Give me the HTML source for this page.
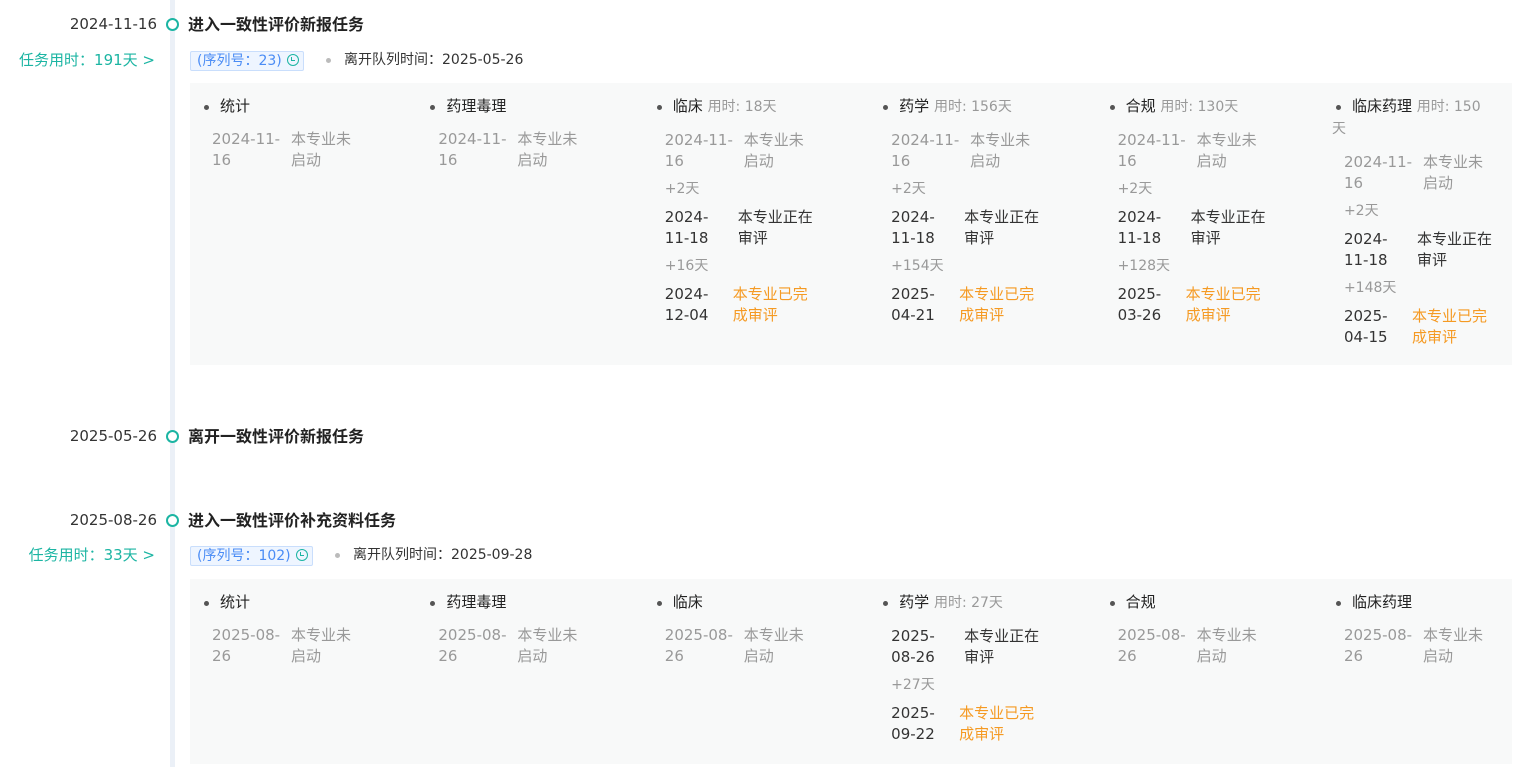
<!DOCTYPE html>
<html><head><meta charset="utf-8"><style>
*{margin:0;padding:0;box-sizing:border-box}
body{width:1522px;height:767px;background:#fff;font-family:"DejaVu Sans","Noto Sans CJK SC",sans-serif;position:relative;overflow:hidden;color:#333}
.line{position:absolute;left:170px;top:0;width:5px;height:767px;background:#ebf0f7}
.ab{position:absolute;white-space:nowrap}
.date{right:1365px;font-size:15px;color:#333;line-height:21px}
.circ{position:absolute;left:166px;width:13px;height:13px;border:2px solid #1cb5a3;border-radius:50%;background:#fff}
.title{left:188px;font-size:16px;font-weight:bold;color:#222;line-height:21px;font-family:"Noto Sans CJK SC",sans-serif}
.used{right:1367px;font-size:15px;color:#1cb5a3;line-height:21px}
.badge{left:190px;height:20px;border:1px solid #c9defc;background:#eef5ff;color:#4a8cf5;font-size:14px;line-height:18px;padding:0 4px 0 6px;border-radius:2px}
.clk{display:inline-block;width:12px;height:12px;border:1.6px solid #1cb5a3;border-radius:50%;position:relative;vertical-align:-1px;margin-left:5px}
.clk:after{content:"";position:absolute;left:3.5px;top:1.5px;width:3px;height:3.5px;border-left:1.4px solid #1cb5a3;border-bottom:1.4px solid #1cb5a3}
.gdot{width:5px;height:5px;border-radius:50%;background:#bbb}
.leave{font-size:14px;color:#333;line-height:21px}
.box{position:absolute;left:190px;width:1322px;background:#f8f9f9;display:flex;padding:13px 0 20px 10px;overflow:hidden}
.col{flex:none;width:226.4px;position:relative;padding-left:20px;font-size:15px;line-height:21px}
.col .h{color:#222;position:relative}
.col .h:before{content:"";position:absolute;left:-16px;top:9px;width:5px;height:5px;border-radius:50%;background:#555}
.col .h .u{color:#999;font-size:14px}
.row{display:flex;margin-left:-8px;white-space:nowrap}
.row .d{flex:none}
.g{color:#999}.k{color:#333}.o{color:#f59a23}
.plus{margin-left:-8px;color:#999;font-size:14px;margin-top:7px}
.mt{margin-top:12px}.m7{margin-top:7px}
</style></head><body>
<div class="line"></div>

<div class="ab date" style="top:14px">2024-11-16</div>
<div class="circ" style="top:18px"></div>
<div class="ab title" style="top:13px">进入一致性评价新报任务</div>
<div class="ab used" style="top:50px">任务用时：191天 &gt;</div>
<div class="ab badge" style="top:51px">(序列号：23)<span class="clk"></span></div>
<div class="ab gdot" style="left:326px;top:58px"></div>
<div class="ab leave" style="left:344px;top:50px">离开队列时间：2025-05-26</div>

<div class="box" style="top:83px;height:282px">
 <div class="col"><div class="h">统计</div>
  <div class="row g mt"><div class="d" style="width:79px">2024-11-<br>16</div><div>本专业未<br>启动</div></div></div>
 <div class="col"><div class="h">药理毒理</div>
  <div class="row g mt"><div class="d" style="width:79px">2024-11-<br>16</div><div>本专业未<br>启动</div></div></div>
 <div class="col"><div class="h">临床 <span class="u">用时: 18天</span></div>
  <div class="row g mt"><div class="d" style="width:79px">2024-11-<br>16</div><div>本专业未<br>启动</div></div>
  <div class="plus">+2天</div>
  <div class="row k m7"><div class="d" style="width:73px">2024-<br>11-18</div><div>本专业正在<br>审评</div></div>
  <div class="plus">+16天</div>
  <div class="row k m7"><div class="d" style="width:68px">2024-<br>12-04</div><div class="o">本专业已完<br>成审评</div></div></div>
 <div class="col"><div class="h">药学 <span class="u">用时: 156天</span></div>
  <div class="row g mt"><div class="d" style="width:79px">2024-11-<br>16</div><div>本专业未<br>启动</div></div>
  <div class="plus">+2天</div>
  <div class="row k m7"><div class="d" style="width:73px">2024-<br>11-18</div><div>本专业正在<br>审评</div></div>
  <div class="plus">+154天</div>
  <div class="row k m7"><div class="d" style="width:68px">2025-<br>04-21</div><div class="o">本专业已完<br>成审评</div></div></div>
 <div class="col"><div class="h">合规 <span class="u">用时: 130天</span></div>
  <div class="row g mt"><div class="d" style="width:79px">2024-11-<br>16</div><div>本专业未<br>启动</div></div>
  <div class="plus">+2天</div>
  <div class="row k m7"><div class="d" style="width:73px">2024-<br>11-18</div><div>本专业正在<br>审评</div></div>
  <div class="plus">+128天</div>
  <div class="row k m7"><div class="d" style="width:68px">2025-<br>03-26</div><div class="o">本专业已完<br>成审评</div></div></div>
 <div class="col"><div class="h">临床药理 <span class="u">用时: 150</span><br><span class="u" style="margin-left:-20px">天</span></div>
  <div class="row g mt"><div class="d" style="width:79px">2024-11-<br>16</div><div>本专业未<br>启动</div></div>
  <div class="plus">+2天</div>
  <div class="row k m7"><div class="d" style="width:73px">2024-<br>11-18</div><div>本专业正在<br>审评</div></div>
  <div class="plus">+148天</div>
  <div class="row k m7"><div class="d" style="width:68px">2025-<br>04-15</div><div class="o">本专业已完<br>成审评</div></div></div>
</div>

<div class="ab date" style="top:426px">2025-05-26</div>
<div class="circ" style="top:430px"></div>
<div class="ab title" style="top:425px">离开一致性评价新报任务</div>

<div class="ab date" style="top:510px">2025-08-26</div>
<div class="circ" style="top:514px"></div>
<div class="ab title" style="top:509px">进入一致性评价补充资料任务</div>
<div class="ab used" style="top:545px">任务用时：33天 &gt;</div>
<div class="ab badge" style="top:546px">(序列号：102)<span class="clk"></span></div>
<div class="ab gdot" style="left:335px;top:553px"></div>
<div class="ab leave" style="left:353px;top:545px">离开队列时间：2025-09-28</div>

<div class="box" style="top:579px;height:185px">
 <div class="col"><div class="h">统计</div>
  <div class="row g mt"><div class="d" style="width:79px">2025-08-<br>26</div><div>本专业未<br>启动</div></div></div>
 <div class="col"><div class="h">药理毒理</div>
  <div class="row g mt"><div class="d" style="width:79px">2025-08-<br>26</div><div>本专业未<br>启动</div></div></div>
 <div class="col"><div class="h">临床</div>
  <div class="row g mt"><div class="d" style="width:79px">2025-08-<br>26</div><div>本专业未<br>启动</div></div></div>
 <div class="col"><div class="h">药学 <span class="u">用时: 27天</span></div>
  <div class="row k mt"><div class="d" style="width:73px">2025-<br>08-26</div><div>本专业正在<br>审评</div></div>
  <div class="plus">+27天</div>
  <div class="row k m7"><div class="d" style="width:68px">2025-<br>09-22</div><div class="o">本专业已完<br>成审评</div></div></div>
 <div class="col"><div class="h">合规</div>
  <div class="row g mt"><div class="d" style="width:79px">2025-08-<br>26</div><div>本专业未<br>启动</div></div></div>
 <div class="col"><div class="h">临床药理</div>
  <div class="row g mt"><div class="d" style="width:79px">2025-08-<br>26</div><div>本专业未<br>启动</div></div></div>
</div>
</body></html>
